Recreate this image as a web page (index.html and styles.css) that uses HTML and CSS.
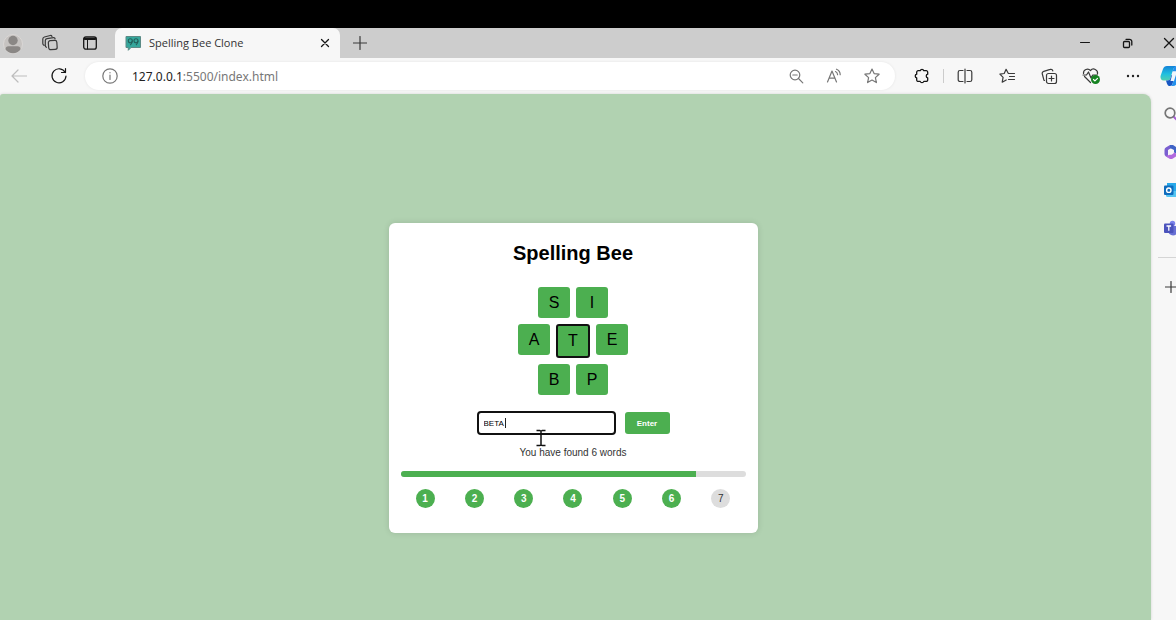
FILE: index.html
```html
<!DOCTYPE html>
<html lang="en">
<head>
<meta charset="utf-8">
<title>Spelling Bee Clone</title>
<link rel="stylesheet" href="styles.css">
</head>
<body>
<div class="letterbox"></div>
<header class="tabstrip">
  <button class="avatar" aria-label="Profile">
    <svg width="20" height="20" viewBox="0 0 20 20"><circle cx="10" cy="10" r="9.5" fill="#c6c3c1" stroke="#dad7d5"/><circle cx="10" cy="6.500" r="4.700" fill="#8a8785"/><path d="M2.500 15.500c0-2.300 1.200-3.300 3-3.300h9c1.800 0 3 1 3 3.300-1.700 2.400-4.500 3.700-7.500 3.700s-5.800-1.300-7.500-3.700z" fill="#8a8785"/></svg>
  </button>
  <button class="slot" aria-label="Workspaces">
    <svg class="line" width="18" height="18" viewBox="0 0 18 18"><rect x="7.500" y="6.500" width="8.500" height="9" rx="2" transform="rotate(-4 12 11)"/><path d="M5.500 13.300a1.800 1.800 0 0 1-1.200-1.800V6.600a2 2 0 0 1 1.700-2l6.500-1c1-.1 1.500.5 1.600 1.300M3 11.300l-.6-.5a1.800 1.800 0 0 1-.6-1.600V5A2.200 2.200 0 0 1 3.400 3l5.800-1.500c1-.2 1.500.2 1.800.9"/></svg>
  </button>
  <button class="slot" aria-label="Tab actions">
    <svg class="line dark" width="16" height="16" viewBox="0 0 16 16"><rect x="1.700" y="1.900" width="12.600" height="12.200" rx="2.200"/><path d="M3 3.700h10" stroke-width="2.600"/><path d="M5.500 5v9" stroke-width="1"/></svg>
  </button>
  <div class="tab">
    <svg width="17" height="17" viewBox="0 0 17 17"><path d="M1 1.500h14.500v11H6L3.300 15.300v-2.800H1z" fill="#35a79c" stroke="#5b8a86"/><g fill="none" stroke="#23605b" stroke-width="1.100"><circle cx="5.300" cy="5.700" r="2"/><circle cx="11" cy="5.700" r="2"/><path d="M7.300 5.700c0 2-.7 3.200-2 4.300M13 5.700c0 2-.7 3.200-2 4.300"/></g></svg>
    <span class="tab-title">Spelling Bee Clone</span>
    <button class="tab-close" aria-label="Close tab"><svg class="line dark" width="10" height="10" viewBox="0 0 10 10"><path d="m1.500 1.500 7 7m0-7-7 7"/></svg></button>
  </div>
  <button class="slot" aria-label="New tab"><svg class="line" width="14" height="14" viewBox="0 0 14 14"><path d="M7 .5v13M.5 7h13"/></svg></button>
  <div class="window-controls">
    <button class="slot" aria-label="Minimize"><svg class="line dark" width="12" height="12" viewBox="0 0 12 12"><path d="M1.500 5.500h9" stroke-width="1"/></svg></button>
    <button class="slot" aria-label="Restore"><svg class="line dark" width="11" height="11" viewBox="0 0 11 11"><rect x="1.500" y="3.500" width="6" height="6" rx="1"/><path d="M4 1.300h3.500a2.300 2.300 0 0 1 2.300 2.300V7"/></svg></button>
    <button class="slot" aria-label="Close window"><svg class="line dark" width="12" height="12" viewBox="0 0 12 12"><path d="m1.500 1.500 9 9m0-9-9 9"/></svg></button>
  </div>
</header>
<nav class="toolbar">
  <button class="slot faded" aria-label="Back"><svg class="line" width="16" height="14" viewBox="0 0 16 14"><path d="M15.500 7H1m6-6L1 7l6 6"/></svg></button>
  <button class="slot" aria-label="Reload"><svg class="line dark" width="18" height="18" viewBox="0 0 18 18"><path d="M15.200 5.500A7 7 0 1 0 16 9M15.500 1.500v4h-4" stroke-width="1.200"/></svg></button>
  <div class="address">
    <svg class="line" width="16" height="16" viewBox="0 0 16 16"><circle cx="8" cy="8" r="7.200"/><path d="M8 7v4.500M8 4.500v.3"/></svg>
    <span class="url"><span class="host">127.0.0.1</span>:5500/index.html</span>
    <button class="address-action" aria-label="Zoom"><svg class="line" width="15" height="15" viewBox="0 0 15 15"><circle cx="6" cy="6" r="4.800"/><path d="M3.800 6h4.400M9.500 9.500l4.300 4.300"/></svg></button>
    <button class="address-action" aria-label="Read aloud"><svg class="line" width="16" height="16" viewBox="0 0 16 16"><path d="M1.500 14 6 3l4.500 11M3.200 10.200h5.600M9.500 3.500c1.300.6 2 1.700 2.100 3.200M10.500 1.200c2.400 1 3.700 3 3.700 5.500"/></svg></button>
    <button class="address-action" aria-label="Favorite"><svg class="line" width="16" height="16" viewBox="0 0 16 16"><path d="m8 1 2.100 4.600 5 .6-3.700 3.400 1 5L8 12.100l-4.400 2.500 1-5L.9 6.200l5-.6z"/></svg></button>
  </div>
  <button class="slot" aria-label="Extensions"><svg class="line dark" width="16" height="16" viewBox="0 0 16 16"><path d="M4.200 2.700h2a1.900 1.900 0 0 1 3.600 0h2.400a1.500 1.500 0 0 1 1.500 1.500v2a1.900 1.900 0 0 0 0 3.700v2a1.500 1.500 0 0 1-1.500 1.500H9.800a1.900 1.900 0 0 1-3.600 0h-2a1.500 1.500 0 0 1-1.500-1.500v-2a1.900 1.900 0 0 1 0-3.700v-2a1.500 1.500 0 0 1 1.500-1.500z" stroke-width="1.300"/></svg></button>
  <span class="toolbar-divider"></span>
  <button class="slot" aria-label="Split screen"><svg class="line" width="16" height="16" viewBox="0 0 16 16"><path d="M6 2.500H3A1.800 1.800 0 0 0 1.200 4.300v7.400A1.800 1.800 0 0 0 3 13.500h3M10 2.500h3a1.800 1.800 0 0 1 1.800 1.800v7.400a1.800 1.800 0 0 1-1.800 1.800h-3M8 1v14"/></svg></button>
  <button class="slot" aria-label="Favorites"><svg class="line" width="17" height="16" viewBox="0 0 17 16"><path d="M11 5.500 9.200 5.300 7.100 1.300 5.200 5.500l-4.300.6 3.200 3.200-.9 4.900 4-2.200M11 5.500h4.500M10.500 8.500h5M9.500 11.500h6"/></svg></button>
  <button class="slot" aria-label="Collections"><svg class="line" width="17" height="17" viewBox="0 0 17 17"><rect x="5.500" y="5.500" width="10" height="10" rx="2"/><path d="M10.500 8v5M8 10.500h5M3.500 12.500 3 12.300 1.300 6A2.200 2.200 0 0 1 2.800 3.300l6.400-1.900a2 2 0 0 1 2.600 1.500"/></svg></button>
  <button class="slot" aria-label="Browser essentials"><svg class="line" width="19" height="18" viewBox="0 0 19 18"><path d="M1.500 6.500A4 4 0 0 1 8.500 3.500a4 4 0 0 1 7 3.300M2.500 9.500l6 6M1 8h3.500L6.500 5l2.500 6 1.700-3H15"/><circle cx="13.500" cy="12.500" r="4.500" fill="#168322" stroke="none"/><path d="m11.500 12.500 1.400 1.400 2.600-2.600" stroke="#fff"/></svg></button>
  <button class="slot" aria-label="Settings and more"><svg width="14" height="4" viewBox="0 0 14 4" fill="#222"><circle cx="2" cy="2" r="1.200"/><circle cx="7" cy="2" r="1.200"/><circle cx="12" cy="2" r="1.200"/></svg></button>
  <button class="slot copilot" aria-label="Copilot"><svg width="24" height="22" viewBox="0 0 24 22"><defs><linearGradient id="cp" x1="0" y1="0" x2="0" y2="1"><stop offset="0" stop-color="#1482d8"/><stop offset=".55" stop-color="#20bfe0"/><stop offset="1" stop-color="#52cfb0"/></linearGradient></defs><path d="M7 1h9.500q-2.500.5-3.300 3.500L10.500 13q-.6 2.500-3 2.500h-4C1 15.500 0 13 .7 10.500L3 4c.7-2 2-3 4-3z" fill="url(#cp)"/><path d="M6 15.500h1.500q2.400 0 3-2.500l1-3H15l-2.500 9q-.7 2-2.500 2C7.500 21 7 19 6 15.500z" fill="#1757c2"/><path d="M16.500 1q3 0 4 5l-3.500 12q-1 3-4 3h-3q2 0 2.700-2.500L16 6.500h-3.400l.6-2Q14 1 16.500 1z" fill="#2491ed"/><path d="M13 6.500h4L14 16h-3.500z" fill="#eef6fc"/></svg></button>
</nav>
<div class="viewport">
  <main class="page">
    <section class="card">
      <h1 class="title">Spelling Bee</h1>
      <div class="hive">
        <div class="hive-row"><button class="letter">S</button><button class="letter">I</button></div>
        <div class="hive-row"><button class="letter">A</button><button class="letter center">T</button><button class="letter">E</button></div>
        <div class="hive-row"><button class="letter">B</button><button class="letter">P</button></div>
      </div>
      <form class="guess">
        <div class="field">
          <input class="guess-input" type="text" value="BETA" aria-label="Your word">
          <span class="caret"></span>
          <svg class="pointer" width="10" height="18" viewBox="0 0 10 18"><path d="M.5 1.500h3.300l1.200.8 1.200-.8h3.300M.5 16.500h3.300l1.200-.8 1.200.8h3.300M5 2v14" fill="none" stroke="#111" stroke-width="1.500"/></svg>
        </div>
        <button class="enter" type="button">Enter</button>
      </form>
      <p class="message">You have found 6 words</p>
      <div class="progress"><div class="progress-fill" style="width: 85.7%"></div></div>
      <div class="steps">
        <span class="step done">1</span><span class="step done">2</span><span class="step done">3</span><span class="step done">4</span><span class="step done">5</span><span class="step done">6</span><span class="step">7</span>
      </div>
    </section>
  </main>
  <aside class="sidebar">
    <button class="side-slot" aria-label="Search"><svg width="16" height="16" viewBox="0 0 16 16" fill="none"><path d="m10 10 4.500 4.500" stroke="#a45bd4" stroke-width="2.200"/><circle cx="7" cy="7" r="4.800" stroke="#757575" stroke-width="1.700"/></svg></button>
    <button class="side-slot" aria-label="Microsoft 365"><svg width="14" height="16" viewBox="0 0 14 16"><path d="M6 1 1.800 3.500Q.5 4.300.5 6v4q0 1.500 1.300 2.300L4 13.500V6l5-3z" fill="#7a5fd0"/><path d="M6 1h3l3.200 2q1.300.8 1.300 2.300V10L10 8.500V6L6 4z" fill="#3f63c6"/><path d="M1.500 12 5 11l5-2.500 3.500 1.500q-.2 1.700-1.300 2.300L8.500 14.700q-1.500.8-3 0z" fill="#b16ade"/><path d="M7 5.200 9.500 6.600v2.900L7 10.900 4.500 9.500V6.600z" fill="#f7f7f7"/></svg></button>
    <button class="side-slot" aria-label="Outlook"><svg width="14" height="16" viewBox="0 0 14 16"><path d="M3 1h11v8H3z" fill="#29a9ea"/><path d="M2 9h12v6H3.500Q2 15 2 13.500z" fill="#56c5f2"/><rect x="0" y="3.500" width="9.500" height="9.500" rx="1" fill="#0f6cbd"/><circle cx="4.800" cy="8.200" r="2.200" fill="none" stroke="#fff" stroke-width="1.400"/></svg></button>
    <button class="side-slot" aria-label="Teams"><svg width="14" height="16" viewBox="0 0 14 16"><circle cx="8.500" cy="3.500" r="2.700" fill="#7b83eb"/><path d="M4 6h10v4.500a5 5 0 0 1-10 0z" fill="#6870d4"/><rect x="0" y="3.500" width="9.500" height="9.500" rx="1" fill="#4b53bc"/><path d="M2.500 6h4.600M4.800 6v4.800" stroke="#fff" stroke-width="1.300"/></svg></button>
    <hr class="side-divider">
    <button class="side-slot" aria-label="Customize"><svg class="line" width="12" height="12" viewBox="0 0 12 12"><path d="M6 .5v11M.5 6h11"/></svg></button>
  </aside>
</div>
</body>
</html>
```
FILE: styles.css
```css
* { box-sizing: border-box; }
body {
  margin: 0;
  height: 100vh;
  display: flex;
  flex-direction: column;
  overflow: hidden;
  background: #f7f7f7;
  font-family: "Liberation Sans", Arial, sans-serif;
}
button { border: 0; padding: 0; background: none; font-family: inherit; cursor: pointer; }
svg { display: block; flex: none; }
.line { fill: none; stroke: #3a3a3a; stroke-width: 1.2; stroke-linecap: round; stroke-linejoin: round; }
.dark { stroke: #151515; stroke-width: 1.3; }
.slot { display: flex; flex: none; align-items: center; justify-content: center; width: 42px; }

.letterbox { flex: none; height: 28px; background: #000; }
.tabstrip {
  display: flex;
  flex: none;
  align-items: stretch;
  height: 30px;
  margin-right: -14px;
  padding-left: 3px;
  background: #cdcdcd;
}
.tabstrip > .slot { width: 40px; }
.avatar { display: flex; align-items: center; margin-right: 7px; padding-top: 1px; }
.tab {
  display: flex;
  align-items: center;
  gap: 7px;
  width: 225px;
  margin-left: 5px;
  padding: 0 10px;
  border-radius: 7px 7px 0 0;
  background: #f7f7f7;
}
.tab-title {
  flex: 1;
  padding-bottom: 2px;
  font: 11px "Open Sans", "Noto Sans", sans-serif;
  color: #333;
}
.window-controls { display: flex; margin-left: auto; }

.toolbar {
  display: flex;
  flex: none;
  align-items: center;
  height: 36px;
  margin-right: -14px;
}
.toolbar > .slot { height: 36px; }
.toolbar > .faded { opacity: .3; width: 38px; }
.address {
  display: flex;
  flex: 1;
  align-items: center;
  height: 28px;
  margin: 0 6px 0 5px;
  padding: 0 4px 0 17px;
  border-radius: 14px;
  background: #fff;
  box-shadow: 0 0 3px rgba(0, 0, 0, .08);
}
.address .line { stroke: #777; }
.url {
  flex: 1;
  margin-left: 14px;
  font: 12px "Noto Sans", "Open Sans", sans-serif;
  color: #777;
}
.host { color: #222; }
.address-action { display: flex; justify-content: center; width: 38px; }
.toolbar-divider { flex: none; width: 1px; height: 14px; background: #ccc; }
.toolbar > .copilot { width: 36px; }

.viewport { display: flex; flex: 1; min-height: 0; margin-right: -14px; }
.page {
  display: flex;
  flex: 1;
  align-items: center;
  justify-content: center;
  padding: 42px 5px 0 0;
  border-radius: 3px 8px 0 0;
  background: #b1d2b1;
  box-shadow: 0 0 3px rgba(0, 0, 0, .15);
}
.sidebar { display: flex; flex: none; flex-direction: column; width: 39px; padding-top: 1px; }
.side-slot { display: flex; align-items: center; justify-content: center; height: 38px; }
.side-divider { width: 32px; height: 1px; margin: 10px 0 10px 7px; border: 0; background: #d5d5d5; }

.card {
  width: 100%;
  max-width: 369px;
  padding: 18px 12px 25px;
  border-radius: 6px;
  background: #fff;
  box-shadow: 0 0 6px rgba(0, 0, 0, .12);
  text-align: center;
}
.title { margin: 0 0 22px; font-size: 20px; line-height: 24px; color: #000; }
.hive { display: flex; flex-direction: column; gap: 6px; }
.hive-row { display: flex; align-items: flex-start; justify-content: center; gap: 6px; }
.letter {
  width: 32px;
  height: 31px;
  border-radius: 3px;
  background: #4caf50;
  font-size: 16px;
  color: #000;
}
.center { width: 34px; height: 34px; border: 2px solid #111; }
.guess { display: flex; align-items: center; justify-content: center; gap: 9px; margin-top: 16px; }
.field { position: relative; }
.guess-input {
  display: block;
  width: 139px;
  height: 24px;
  padding: 0 5px;
  border: 2px solid #111;
  border-radius: 4px;
  background: #fff;
  font: 8px "Liberation Sans", Arial, sans-serif;
  color: #000;
}
.caret { position: absolute; top: 7px; left: 28px; width: 1px; height: 10px; background: #222; }
.pointer { position: absolute; top: 18px; left: 59px; }
.enter {
  width: 45px;
  height: 22px;
  border-radius: 3px;
  background: #4caf50;
  font-size: 8px;
  font-weight: bold;
  color: #fff;
}
.message { margin: 10px 0; font-size: 10px; line-height: 16px; color: #333; }
.progress { height: 6px; overflow: hidden; border-radius: 3px; background: #ddd; }
.progress-fill { height: 100%; background: #4caf50; }
.steps { display: flex; justify-content: space-around; margin-top: 12px; }
.step {
  width: 19px;
  height: 19px;
  border-radius: 50%;
  background: #ddd;
  font-size: 10px;
  line-height: 19px;
  color: #333;
}
.done { background: #4caf50; color: #fff; font-weight: bold; }
```
